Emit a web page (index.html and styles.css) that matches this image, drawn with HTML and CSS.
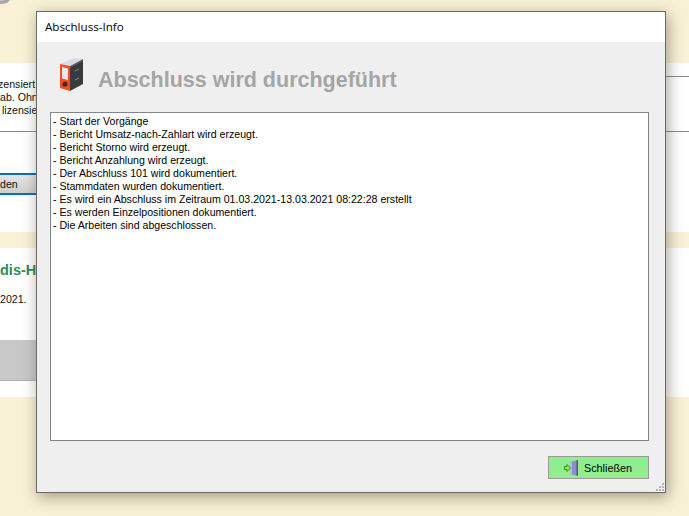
FILE: index.html
```html
<!DOCTYPE html>
<html lang="de">
<head>
<meta charset="utf-8">
<title>Abschluss-Info</title>
<link rel="stylesheet" href="styles.css">
</head>
<body>
<div class="page">
  <div class="band band-top"><span class="band-title">S</span></div>
  <section class="panel panel-a">
    <div class="notice">
      <div class="notice-text">
        <div class="pull">zensiert ist</div>
        <div>ab. Ohne</div>
        <div class="inset">lizensiert</div>
      </div>
      <div class="notice-side"></div>
    </div>
    <div class="tab-strip">den</div>
  </section>
  <div class="band band-mid"></div>
  <section class="panel panel-b">
    <h2 class="green-title">dis-Hotel</h2>
    <p class="plain">2021.</p>
    <div class="gray-block"></div>
  </section>
  <div class="band band-bottom"></div>
</div>

<div class="dialog">
  <div class="titlebar">Abschluss-Info</div>
  <div class="dialog-body">
    <div class="heading">
      <svg class="binder" viewBox="0 0 26 34" width="26" height="34" aria-hidden="true">
        <polygon points="12,8 25,1 25,26 12,33" fill="#3a3b3e"/>
        <polygon points="12,8 25,1 25,3 12,10" fill="#5c5d60"/>
        <polygon points="2,6 15,0 25,1 12,8" fill="#d9dbe0"/>
        <polygon points="2,6 12,8 12,33 2,30" fill="#f0501e"/>
        <polygon points="4,9 10,10.5 10,22 4,20.5" fill="#e8ebf2"/>
        <circle cx="7" cy="26" r="2.6" fill="#4a2a20"/>
        <path d="M17 13l4-2M17 22l4-2" stroke="#8a8b8e" stroke-width="1"/>
      </svg>
      <h1 class="heading-text">Abschluss wird durchgeführt</h1>
    </div>
    <div class="log">
      <div>- Start der Vorgänge</div>
      <div>- Bericht Umsatz-nach-Zahlart wird erzeugt.</div>
      <div>- Bericht Storno wird erzeugt.</div>
      <div>- Bericht Anzahlung wird erzeugt.</div>
      <div>- Der Abschluss 101 wird dokumentiert.</div>
      <div>- Stammdaten wurden dokumentiert.</div>
      <div>- Es wird ein Abschluss im Zeitraum 01.03.2021-13.03.2021 08:22:28 erstellt</div>
      <div>- Es werden Einzelpositionen dokumentiert.</div>
      <div>- Die Arbeiten sind abgeschlossen.</div>
    </div>
    <div class="footer">
      <button class="close-btn" type="button">
        <svg class="door" viewBox="0 0 15 16" width="15" height="16" aria-hidden="true">
          <polygon points="6,2 14,0 14,16 6,14" fill="#8c8ec6"/>
          <polygon points="12.5,0.4 14,0 14,16 12.5,15.6" fill="#55577f"/>
          <polygon points="6,2 8,1.5 8,14.5 6,14" fill="#b9bade"/>
          <path d="M0.5 6.5H3V4.5L6.5 8L3 11.5V9.5H0.5Z" fill="#9be866" stroke="#1f9a12" stroke-width="1"/>
        </svg>
        <span>Schließen</span>
      </button>
    </div>
    <svg class="grip" viewBox="0 0 10 10" width="10" height="10" aria-hidden="true">
      <path d="M7 1h2v2H7zM4 4h2v2H4zM7 4h2v2H7zM1 7h2v2H1zM4 7h2v2H4zM7 7h2v2H7z" fill="#b4b4b4"/>
    </svg>
  </div>
</div>
</body>
</html>
```
FILE: styles.css
```css
html, body {
  margin: 0;
  height: 100%;
  overflow: hidden;
  background: #f8f1d6;
  font-family: "Liberation Sans", Arial, sans-serif;
}
.page {
  display: flex;
  flex-direction: column;
  height: 516px;
}
.band {
  background: #f8f1d6;
  flex: none;
  overflow: hidden;
}
.band-top { height: 63px; }
.band-title {
  display: block;
  margin-top: -23px;
  font-size: 32px;
  line-height: 32px;
  font-weight: bold;
  color: #a8a8a8;
  text-indent: -10px;
}
.band-mid { height: 16px; }
.band-bottom { flex: 1; }
.panel {
  background: #fff;
  flex: none;
  overflow: hidden;
}
.panel-a { height: 169px; }
.panel-b { height: 149px; }
.notice {
  height: 68px;
  border-bottom: 1px solid #868b96;
  display: flex;
  justify-content: space-between;
  align-items: flex-start;
}
.notice-text {
  padding-top: 15px;
  font-size: 10.6px;
  line-height: 13px;
  color: #111;
  white-space: nowrap;
}
.pull { margin-left: -2px; }
.inset { padding-left: 2px; }
.notice-side {
  width: 60px;
  height: 13px;
  border-bottom: 1px solid #868b96;
}
.tab-strip {
  margin-top: 41px;
  width: 60px;
  height: 18px;
  border-top: 2px solid #0a6fc2;
  border-bottom: 2px solid #0a6fc2;
  background: linear-gradient(#e4e4e4, #cfcfcf);
  font-size: 10.6px;
  line-height: 18px;
  color: #111;
}
.green-title {
  margin: 14px 0 0;
  font-size: 14.5px;
  line-height: 17px;
  font-weight: bold;
  color: #2e8b57;
  white-space: nowrap;
}
.plain {
  margin: 13px 0 0;
  font-size: 10.6px;
  line-height: 14px;
  color: #111;
}
.gray-block {
  margin-top: 34px;
  width: 60px;
  height: 40px;
  background: #c8c8c8;
  border-bottom: 1px solid #b0b0b0;
}
.dialog {
  position: absolute;
  left: 36px;
  top: 11px;
  width: 628px;
  height: 480px;
  border: 1px solid #6a6a6a;
  background: #efefef;
  display: flex;
  flex-direction: column;
  box-shadow: 2px 4px 14px rgba(60, 50, 30, 0.45);
}
.titlebar {
  height: 30px;
  flex: none;
  background: #fff;
  font-family: "Open Sans", sans-serif;
  font-size: 11.6px;
  line-height: 30px;
  padding-left: 8px;
  color: #000;
}
.dialog-body {
  flex: 1;
  min-height: 0;
  display: flex;
  flex-direction: column;
  padding: 0 16px 0 13px;
  position: relative;
}
.heading {
  height: 70px;
  flex: none;
  display: flex;
  align-items: center;
  box-sizing: border-box;
  padding-left: 8px;
}
.binder {
  flex: none;
  margin-bottom: 4px;
}
.heading-text {
  margin: 6px 0 0 14px;
  font-size: 21.5px;
  line-height: 26px;
  font-weight: bold;
  color: #a5a5a5;
  white-space: nowrap;
}
.log {
  flex: 1;
  min-height: 0;
  background: #fff;
  border: 1px solid #7f8590;
  padding: 2px;
  font-size: 10.6px;
  line-height: 13px;
  color: #000;
}
.footer {
  height: 51px;
  flex: none;
  display: flex;
  justify-content: flex-end;
  padding-top: 15px;
  box-sizing: border-box;
}
.close-btn {
  width: 101px;
  height: 23px;
  background: #90ee90;
  border: 1px solid #999;
  padding: 0 0 0 15px;
  display: flex;
  align-items: center;
  gap: 5px;
  font-family: "Liberation Sans", Arial, sans-serif;
  font-size: 10.8px;
  color: #000;
}
.door { flex: none; }
.grip {
  position: absolute;
  right: 0;
  bottom: 0;
}
```
